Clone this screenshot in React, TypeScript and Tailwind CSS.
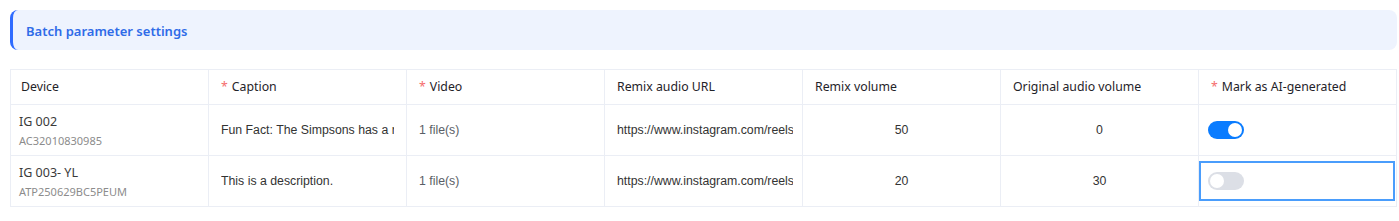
import React from "react";

const cols = [
  { label: "Device", req: false },
  { label: "Caption", req: true },
  { label: "Video", req: true },
  { label: "Remix audio URL", req: false },
  { label: "Remix volume", req: false },
  { label: "Original audio volume", req: false },
  { label: "Mark as AI-generated", req: true },
];

const rows = [
  {
    name: "IG 002",
    id: "AC32010830985",
    caption: "Fun Fact: The Simpsons has a record number of guest stars",
    url: "https://www.instagram.com/reels/abc",
    remix: "50",
    orig: "0",
    ai: true,
  },
  {
    name: "IG 003- YL",
    id: "ATP250629BC5PEUM",
    caption: "This is a description.",
    url: "https://www.instagram.com/reels/xyz",
    remix: "20",
    orig: "30",
    ai: false,
  },
];

function Toggle({ on }: { on: boolean }) {
  return on ? (
    <div className="w-[36px] h-[18px] rounded-full bg-[#0a7cff] flex items-center justify-end pr-[2px]">
      <div className="w-[14px] h-[14px] rounded-full bg-white" />
    </div>
  ) : (
    <div className="w-[36px] h-[18px] rounded-full bg-[#dcdfe6] flex items-center pl-[2px]">
      <div className="w-[14px] h-[14px] rounded-full bg-white" />
    </div>
  );
}

export default function App() {
  const base = "border-r border-[#ebeef5] flex items-center min-w-0";
  const cell = `${base} px-3`;
  const body = "font-['Liberation_Sans',Arial,sans-serif] text-[12.3px]";
  return (
    <div className="w-[1399px] h-[221px] bg-white pt-[10px] pl-[10px] pr-[2px] font-['Noto_Sans',sans-serif]">
      <div className="h-[40px] rounded-[8px] border-l-[3px] border-[#2f6bff] bg-[#eef3fe] flex items-center pl-[13px] pt-[3px]">
        <span className="text-[13px] font-semibold text-[#2f6be8]">Batch parameter settings</span>
      </div>
      <div className="mt-[19px] border-l border-t border-[#ebeef5]">
        <div className="grid grid-cols-7 h-[35px] border-b border-[#ebeef5]">
          {cols.map((c, i) => (
            <div
              key={i}
              className={`${base} ${i === 0 ? "pl-[10px] pr-3" : "px-3"} text-[12.3px] text-[#1f2329]`}
            >
              {c.req && <span className="text-[#f56c6c] mr-[4px]">*</span>}
              {c.label}
            </div>
          ))}
        </div>
        {rows.map((r, ri) => (
          <div key={ri} className="grid grid-cols-7 h-[51px] border-b border-[#ebeef5]">
            <div className={`${base} pl-[8px] pr-3 pt-[2px] flex-col items-start justify-center`}>
              <div className="text-[12.5px] text-[#3a3a3a] leading-[18px]">{r.name}</div>
              <div className="text-[11px] text-[#8c8c8c] leading-[16px] mt-[2px]">{r.id}</div>
            </div>
            <div className={`${cell} ${body} text-[#333]`}>
              <div className="overflow-hidden whitespace-nowrap">{r.caption}</div>
            </div>
            <div className={`${cell} ${body} text-[#5a5e66]`}>1 file(s)</div>
            <div className={`${base} pl-3 pr-[9px] ${body} text-[#333]`}>
              <div className="overflow-hidden whitespace-nowrap">{r.url}</div>
            </div>
            <div className={`${cell} justify-center ${body} text-[#333]`}>{r.remix}</div>
            <div className={`${cell} justify-center ${body} text-[#333]`}>{r.orig}</div>
            <div className={`${base} py-[5px] pl-0 pr-[1px]`}>
              <div
                className={`w-full h-full flex items-center pl-[7px] border-2 ${
                  r.ai ? "border-transparent" : "border-[#4a9dfc]"
                }`}
              >
                <Toggle on={r.ai} />
              </div>
            </div>
          </div>
        ))}
      </div>
    </div>
  );
}
